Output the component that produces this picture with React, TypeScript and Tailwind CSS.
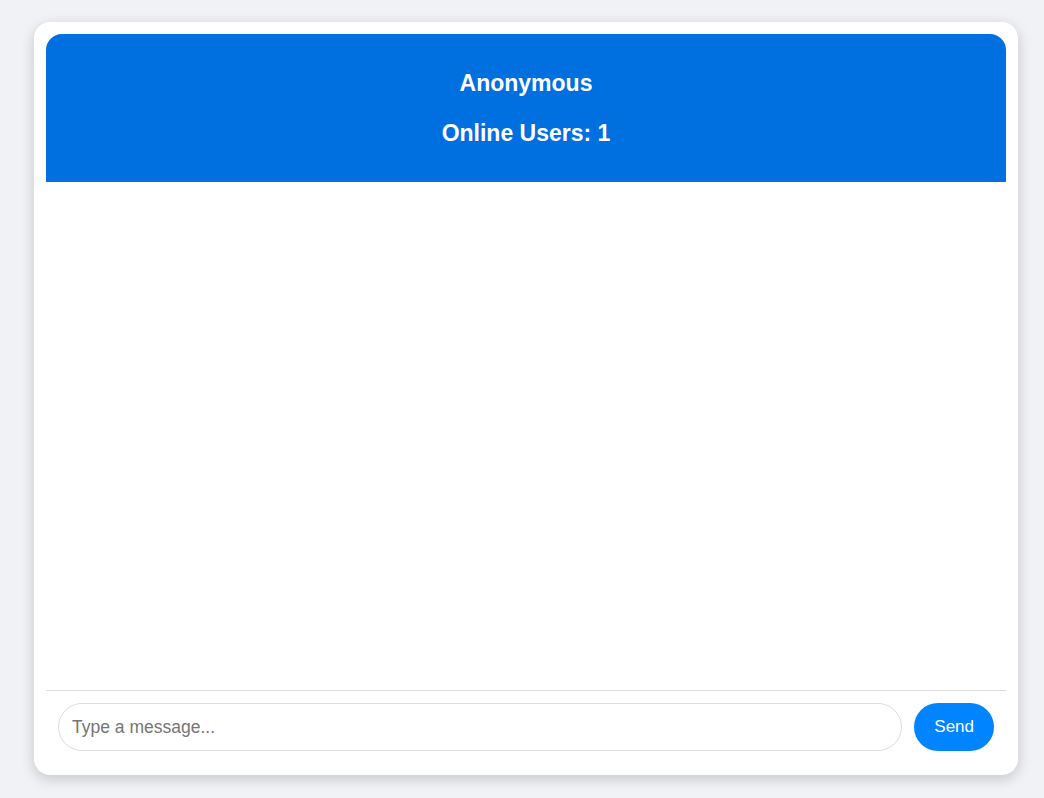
export default function App() {
  return (
    <div
      className="min-h-screen w-full bg-[#f0f2f5] pt-[22px] pl-[34px]"
      style={{ fontFamily: '"Liberation Sans", Arial, sans-serif' }}
    >
      <div className="flex h-[753px] w-[984px] flex-col rounded-2xl bg-white p-3 shadow-[0_4px_14px_rgba(0,0,0,0.18)]">
        <div className="flex flex-col items-center gap-6 rounded-t-2xl bg-[#006fdf] py-9 text-white">
          <h2 className="text-[23px] font-bold leading-[26px]">Anonymous</h2>
          <h2 className="text-[23px] font-bold leading-[26px]">Online Users: 1</h2>
        </div>

        <div className="flex-1 bg-white"></div>

        <div className="flex items-center gap-3 border-t border-[#dddddd] p-3">
          <input
            className="h-12 flex-1 rounded-full border border-[#dddddd] px-[13px] text-[17.5px] text-gray-800 outline-none placeholder:text-[#757575]"
            placeholder="Type a message..."
          />
          <button className="h-12 rounded-full bg-[#0084ff] px-5 text-[17px] text-white">
            Send
          </button>
        </div>
      </div>
    </div>
  );
}
